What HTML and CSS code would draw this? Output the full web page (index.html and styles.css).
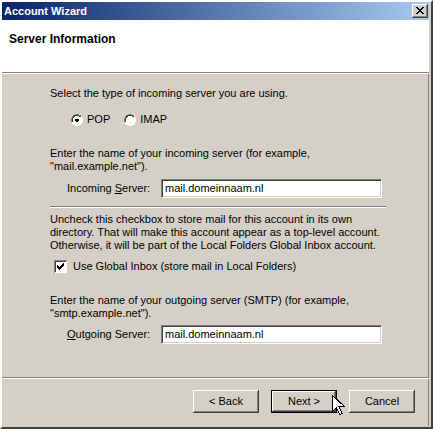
FILE: index.html
```html
<!DOCTYPE html>
<html>
<head>
<meta charset="utf-8">
<title>Account Wizard</title>
<link rel="stylesheet" href="styles.css">
</head>
<body>
<div class="window">
  <div class="titlebar">
    <span class="title">Account Wizard</span>
    <span class="close">
      <svg width="16" height="14" viewBox="0 0 16 14">
        <path d="M4 3h2v1h1v1h2v-1h1v-1h2v1h-1v1h-1v1h-1v1h1v1h1v1h1v1h-2v-1h-1v-1h-2v1h-1v1h-2v-1h1v-1h1v-1h1v-1h-1v-1h-1v-1h-1z" fill="#000"/>
      </svg>
    </span>
  </div>

  <div class="header">
    <h1 class="page-title">Server Information</h1>
  </div>
  <div class="rule"></div>

  <div class="content">
    <p class="text">Select the type of incoming server you are using.</p>

    <div class="radios">
      <span class="option">
        <svg class="radio" width="12" height="12" viewBox="0 0 12 12">
          <path d="M4 0h4v1h2v1h1v2h1v4h-1v2h-1v1h-2v1h-4v-1h-2v-1h-1v-2h-1v-4h1v-2h1v-1h2z" fill="#fff"/>
          <path d="M4 0h4v1h2v1h-2v-1h-4v1h-2v2h-1v4h-1v-4h1v-2h1v-1h2z" fill="#808080"/>
          <path d="M4 1h4v1h2v1h-2v-1h-4v1h-1v1h-1v4h-1v-4h1v-2h1v-1h1z" fill="#404040"/>
          <path d="M4 5h4v2h-1v1h-2v-1h-1z" fill="#000"/>
        </svg>
        <span>POP</span>
      </span>
      <span class="option">
        <svg class="radio" width="12" height="12" viewBox="0 0 12 12">
          <path d="M4 0h4v1h2v1h1v2h1v4h-1v2h-1v1h-2v1h-4v-1h-2v-1h-1v-2h-1v-4h1v-2h1v-1h2z" fill="#fff"/>
          <path d="M4 0h4v1h2v1h-2v-1h-4v1h-2v2h-1v4h-1v-4h1v-2h1v-1h2z" fill="#808080"/>
          <path d="M4 1h4v1h2v1h-2v-1h-4v1h-1v1h-1v4h-1v-4h1v-2h1v-1h1z" fill="#404040"/>
        </svg>
        <span>IMAP</span>
      </span>
    </div>

    <p class="text gap-lg">Enter the name of your incoming server (for example,<br>"mail.example.net").</p>

    <div class="field">
      <span class="label">Incoming <u>S</u>erver:</span>
      <span class="input">mail.domeinnaam.nl</span>
    </div>

    <div class="divider"></div>

    <p class="text after-divider">Uncheck this checkbox to store mail for this account in its own<br>directory. That will make this account appear as a top-level account.<br>Otherwise, it will be part of the Local Folders Global Inbox account.</p>

    <div class="check">
      <svg class="checkbox" width="13" height="13" viewBox="0 0 13 13">
        <rect x="0" y="0" width="13" height="13" fill="#fff"/>
        <path d="M0 0h13v1h-12v12h-1z" fill="#808080"/>
        <path d="M1 1h11v1h-10v10h-1z" fill="#404040"/>
        <path d="M12 1h1v12h-12v-1h11z" fill="#fff"/>
        <path d="M3 5h1v1h1v1h1v-1h1v-1h1v-1h1v-1h1v3h-1v1h-1v1h-1v1h-1v1h-1v-1h-1v-1h-1z" fill="#000"/>
      </svg>
      <span>Use Global Inbox (store mail in Local Folders)</span>
    </div>

    <p class="text gap-lg">Enter the name of your outgoing server (SMTP) (for example,<br>"smtp.example.net").</p>

    <div class="field field-out">
      <span class="label"><u>O</u>utgoing Server:</span>
      <span class="input">mail.domeinnaam.nl</span>
    </div>
  </div>

  <div class="rule"></div>

  <div class="footer">
    <button class="btn">&lt; Back</button>
    <button class="btn btn-default">Next &gt;</button>
    <button class="btn">Cancel</button>
  </div>

  <svg class="pointer" width="13" height="21" viewBox="0 0 13 21">
    <path d="M0.5 0.5v16l4-4 3 7 2.5-1-3-7h5.5z" fill="#fff" stroke="#000" stroke-width="1" shape-rendering="crispEdges"/>
  </svg>
</div>
</body>
</html>
```

FILE: styles.css
```css
* {
  box-sizing: border-box;
}

html, body {
  margin: 0;
  padding: 0;
  background: #d4d0c8;
}

body {
  font-family: "Liberation Sans", Arial, sans-serif;
  font-size: 11px;
  line-height: 13px;
  color: #000;
}

.window {
  position: relative;
  width: 433px;
  height: 429px;
  display: flex;
  flex-direction: column;
  background: #d4d0c8;
  border-top: 2px solid #fff;
  border-left: 2px solid #fff;
  border-right: 2px solid #404040;
  border-bottom: 2px solid #404040;
  box-shadow: inset -2px -1px 0 #d4d0c8, inset -3px -1px 0 #808080;
  padding-right: 2px;
}

.titlebar {
  height: 18px;
  flex: none;
  display: flex;
  align-items: center;
  justify-content: space-between;
  padding: 0 1px 0 2px;
  background: linear-gradient(to right, #0a246a, #a6caf0);
}

.title {
  color: #fff;
  font-weight: bold;
  font-size: 11px;
}

.close {
  display: flex;
  width: 16px;
  height: 14px;
  background: #d4d0c8;
  box-shadow: inset -1px -1px 0 #404040, inset 1px 1px 0 #fff, inset -2px -2px 0 #808080;
}

.header {
  height: 52px;
  flex: none;
  background: #fff;
  padding: 13px 0 0 7px;
}

.page-title {
  margin: 0;
  font-size: 12px;
  font-weight: bold;
  line-height: 13px;
}

.rule {
  flex: none;
  height: 2px;
  border-top: 1px solid #808080;
  border-bottom: 1px solid #fff;
}

.content {
  flex: 1;
  padding: 13px 0 0 48px;
}

.text {
  margin: 0;
}

.gap-lg {
  margin-top: 21px;
}

.radios {
  display: flex;
  align-items: center;
  height: 13px;
  margin-top: 13px;
  padding-left: 21px;
  gap: 14px;
}

.option {
  display: flex;
  align-items: center;
  gap: 4px;
}

.radio {
  display: block;
}

.field {
  display: flex;
  align-items: center;
  margin-top: 6px;
  padding-left: 17px;
}

.field-out {
  margin-top: 5px;
}

.label {
  width: 94px;
}

.input {
  width: 221px;
  height: 19px;
  background: #fff;
  padding: 2px 0 0 3px;
  border-top: 1px solid #808080;
  border-left: 1px solid #808080;
  border-right: 1px solid #fff;
  border-bottom: 1px solid #fff;
  box-shadow: inset 1px 1px 0 #404040, inset -1px -1px 0 #d4d0c8;
}

.divider {
  width: 336px;
  height: 2px;
  margin-top: 8px;
  border-top: 1px solid #808080;
  border-bottom: 1px solid #fff;
}

.after-divider {
  margin-top: 5px;
}

.check {
  display: flex;
  align-items: center;
  gap: 6px;
  margin-top: 8px;
  padding-left: 4px;
  height: 13px;
}

.checkbox {
  display: block;
}

.footer {
  flex: none;
  height: 48px;
  display: flex;
  justify-content: flex-end;
  align-items: flex-start;
  padding: 11px 14px 0 0;
  gap: 12px;
}

.btn {
  width: 66px;
  height: 23px;
  margin: 0;
  padding: 0;
  font: inherit;
  color: #000;
  background: #d4d0c8;
  border: none;
  box-shadow: inset -1px -1px 0 #404040, inset 1px 1px 0 #fff, inset -2px -2px 0 #808080;
}

.btn-default {
  border: 1px solid #000;
  box-shadow: inset -1px -1px 0 #404040, inset 1px 1px 0 #fff, inset -2px -2px 0 #808080;
}

.pointer {
  position: absolute;
  left: 330px;
  top: 393px;
}
```
